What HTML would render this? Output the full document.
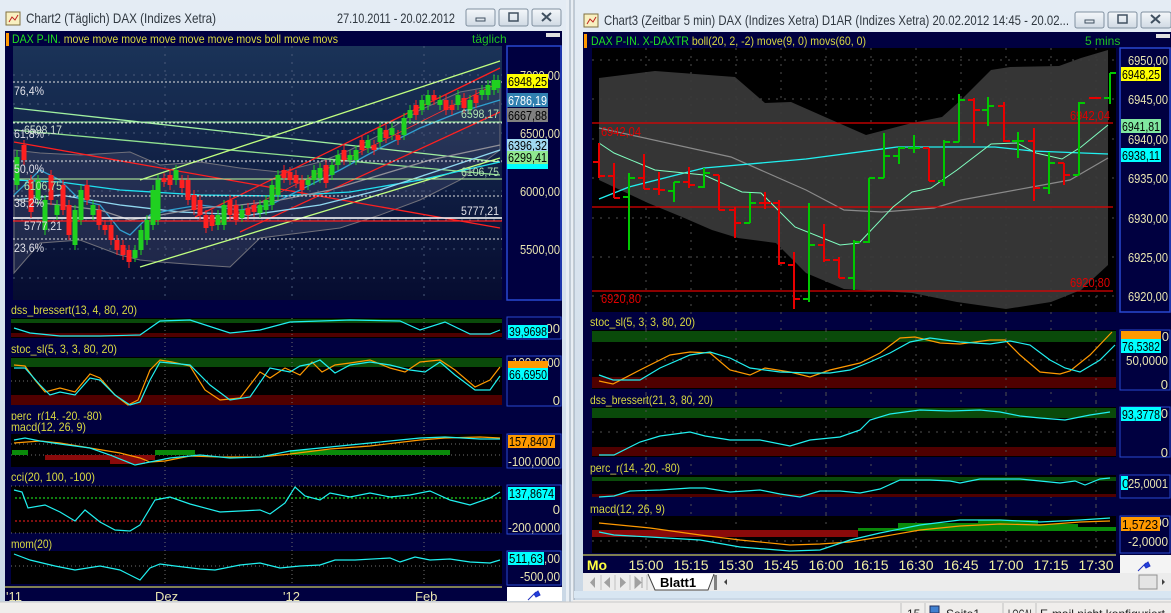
<!DOCTYPE html>
<html><head><meta charset="utf-8"><style>
html,body{margin:0;padding:0;background:#f0eeec;}
svg{display:block;font-family:"Liberation Sans Narrow","Liberation Sans",sans-serif;}
</style></head><body>
<svg width="1171" height="613" viewBox="0 0 1171 613" xmlns="http://www.w3.org/2000/svg">
<defs>
<linearGradient id="tb" x1="0" y1="0" x2="0" y2="1"><stop offset="0" stop-color="#e4ecf4"/><stop offset="1" stop-color="#cad8e6"/></linearGradient>
<linearGradient id="lp" x1="0" y1="0" x2="0" y2="1"><stop offset="0" stop-color="#1a3358"/><stop offset="1" stop-color="#060c30"/></linearGradient>
<linearGradient id="btn" x1="0" y1="0" x2="0" y2="1"><stop offset="0" stop-color="#f4f7fa"/><stop offset="1" stop-color="#d0dae4"/></linearGradient>
</defs>
<rect width="1171" height="613" fill="#f0eeec"/>
<!-- LEFT WINDOW -->
<rect x="0" y="0" width="566" height="603" fill="url(#tb)"/>
<rect x="566" y="0" width="7" height="603" fill="#e8eef4"/>
<line x1="570" y1="0" x2="570" y2="603" stroke="#98a8b8"/>
<rect x="6" y="12" width="14" height="13" fill="#f8f0c0" stroke="#807040"/>
<path d="M9 22 l3-5 3 3 3-5" stroke="#c02020" fill="none"/>
<text x="26" y="23" font-family="Liberation Sans,sans-serif" font-size="14" fill="#303840" textLength="190" lengthAdjust="spacingAndGlyphs">Chart2 (Täglich)  DAX (Indizes Xetra)</text>
<text x="337" y="23" font-family="Liberation Sans,sans-serif" font-size="14" fill="#303840" textLength="118" lengthAdjust="spacingAndGlyphs">27.10.2011 - 20.02.2012</text>
<rect x="466" y="9" width="29" height="17" rx="2" fill="url(#btn)" stroke="#8090a0"/>
<rect x="476" y="18" width="9" height="3" fill="none" stroke="#405060"/>
<rect x="499" y="9" width="29" height="17" rx="2" fill="url(#btn)" stroke="#8090a0"/>
<rect x="509" y="13" width="9" height="8" fill="none" stroke="#405060" stroke-width="1.5"/>
<rect x="532" y="9" width="29" height="17" rx="2" fill="url(#btn)" stroke="#8090a0"/>
<path d="M542 13 l9 8 M551 13 l-9 8" stroke="#405060" stroke-width="2"/>
<rect x="5" y="31" width="557" height="570" fill="#000040"/>
<rect x="6" y="33" width="3" height="13" fill="#ff9900"/>
<text x="12" y="43" font-size="12" fill="#20e020" textLength="326" lengthAdjust="spacingAndGlyphs">DAX P-IN. <tspan fill="#d8d840">move move move move move move movs boll move movs</tspan></text>
<text x="472" y="43" font-size="12" fill="#20c020">täglich</text>
<rect x="546" y="33" width="14" height="4" fill="#e0e0e0"/>
<!-- main plot -->
<rect x="13" y="46" width="489" height="254" fill="url(#lp)"/>
<g stroke="#4a5a7a" stroke-dasharray="2,6" stroke-width="1">
<line x1="13" y1="75" x2="502" y2="75"/><line x1="13" y1="104" x2="502" y2="104"/><line x1="13" y1="133" x2="502" y2="133"/><line x1="13" y1="162" x2="502" y2="162"/><line x1="13" y1="191" x2="502" y2="191"/><line x1="13" y1="220" x2="502" y2="220"/><line x1="13" y1="249" x2="502" y2="249"/><line x1="13" y1="278" x2="502" y2="278"/>
<line x1="165" y1="46" x2="165" y2="300"/><line x1="292" y1="46" x2="292" y2="300"/><line x1="424" y1="46" x2="424" y2="300"/>
</g>
<polygon points="14,150 40,153 80,155 130,152 160,165 200,162 240,168 280,172 320,162 350,150 380,135 420,110 460,92 500,85 500,150 460,180 420,200 380,215 340,228 300,233 260,238 230,267 200,265 160,262 140,260 120,255 80,240 40,243 14,273" fill="#4a5070" fill-opacity="0.35" stroke="#70707a" stroke-width="1"/>
<g fill="none" stroke-width="1.3">
<line x1="14" y1="108" x2="500" y2="162" stroke="#a0f0a0"/>
<line x1="14" y1="130" x2="500" y2="175" stroke="#90e090"/>
<line x1="140" y1="180" x2="500" y2="61" stroke="#c0ff80"/>
<line x1="140" y1="267" x2="500" y2="158" stroke="#c0ff80"/>
<line x1="195" y1="217" x2="500" y2="68" stroke="#ff2020"/>
<line x1="240" y1="232" x2="500" y2="112" stroke="#ff2020"/>
<line x1="215" y1="225" x2="500" y2="82" stroke="#ff3030" stroke-width="0.8"/>
<line x1="14" y1="142" x2="500" y2="228" stroke="#ff2020"/>
<polyline points="14,180 60,182 120,190 200,195 280,196 350,192 420,180 500,162" stroke="#20e0f0"/>
<polyline points="14,200 60,195 120,205 180,212 250,215 320,205 380,190 440,170 500,150" stroke="#90d8f0"/>
<polyline points="14,195 40,170 60,180 80,200 100,205 120,230 130,235 150,215 170,210 200,205 240,210 270,205 300,190 340,170 380,148 420,128 460,112 500,100" stroke="#30a0d0"/>
<polyline points="14,200 60,205 100,210 130,220 160,215 200,208 240,205 280,200 330,190 380,175 430,160 500,145" stroke="#909098"/>
</g>
<g stroke-dasharray="2,2" stroke="#e0e0e0" stroke-width="1">
<line x1="13" y1="82" x2="502" y2="82"/><line x1="13" y1="123" x2="502" y2="123"/><line x1="13" y1="161" x2="502" y2="161"/><line x1="13" y1="196" x2="502" y2="196"/><line x1="13" y1="239" x2="502" y2="239"/>
</g>
<line x1="13" y1="122" x2="502" y2="122" stroke="#a0f0a0"/>
<line x1="13" y1="179" x2="502" y2="179" stroke="#c0ffa0"/>
<line x1="13" y1="218" x2="502" y2="218" stroke="#ffffff" stroke-width="1.5"/>
<line x1="13" y1="221" x2="502" y2="221" stroke="#ff2020" stroke-width="1.2"/>
<!-- candles -->
<path d="M17 150V190M38 175V205M45 195V235M57 200V220M75 205V250M81 185V225M93 200V220M135 245V262M141 225V255M147 215V245M153 185V230M158 175V225M176 165V185M218 210V230M224 200V230M242 205V222M260 200V218M266 195V215M272 180V210M278 170V200M308 175V190M314 165V185M320 163V183M332 160V180M338 150V170M350 150V165M356 145V165M368 135V153M380 123V147M392 123V140M404 113V140M410 105V123M422 95V115M428 90V110M440 95V110M458 90V110M470 95V115M482 85V100M488 80V100M494 75V95M498 75V93" stroke="#20d020" stroke-width="1"/>
<path d="M17 157V185M38 180V200M45 200V230M57 205V215M75 210V245M81 190V220M93 205V215M135 250V258M141 230V250M147 220V240M153 190V225M158 180V220M176 170V180M218 215V225M224 205V225M242 210V218M260 205V213M266 200V210M272 185V205M278 175V195M308 180V185M314 170V180M320 168V178M332 165V175M338 155V165M350 155V160M356 150V160M368 140V148M380 128V142M392 128V135M404 118V135M410 110V118M422 100V110M428 95V105M440 100V105M458 95V105M470 100V110M482 90V95M488 85V95M494 80V90M498 80V88" stroke="#20d020" stroke-width="5"/>
<path d="M24 140V165M31 175V218M51 170V205M63 180V215M69 200V240M87 180V205M99 205V230M105 220V235M111 220V245M117 235V255M123 240V260M129 245V268M164 173V187M170 170V190M182 175V193M188 175V205M194 190V215M200 195V220M206 210V233M212 210V231M230 195V220M236 200V225M248 203V220M254 200V217M284 165V183M290 167V185M296 170V188M302 175V195M326 160V188M344 145V165M362 135V155M374 140V155M386 125V143M398 130V145M416 100V120M434 90V105M446 95V115M452 100V115M464 93V113M476 90V108" stroke="#ff2020" stroke-width="1"/>
<path d="M24 145V160M31 180V212M51 175V200M63 185V210M69 205V235M87 185V200M99 210V225M105 225V230M111 225V240M117 240V250M123 245V255M129 250V262M164 178V182M170 175V185M182 180V188M188 180V200M194 195V210M200 200V215M206 215V228M212 215V226M230 200V215M236 205V220M248 208V215M254 205V212M284 170V178M290 172V180M296 175V183M302 180V190M326 165V183M344 150V160M362 140V150M374 145V150M386 130V138M398 135V140M416 105V115M434 95V100M446 100V110M452 105V110M464 98V108M476 95V103" stroke="#ff2020" stroke-width="5"/>
<g font-size="12" fill="#e0e0e8" lengthAdjust="spacingAndGlyphs">
<text x="14" y="95" textLength="30" lengthAdjust="spacingAndGlyphs">76,4%</text><text x="14" y="138" textLength="30" lengthAdjust="spacingAndGlyphs">61,8%</text><text x="14" y="173" textLength="30" lengthAdjust="spacingAndGlyphs">50,0%</text><text x="14" y="207" textLength="30" lengthAdjust="spacingAndGlyphs">38,2%</text><text x="14" y="252" textLength="30" lengthAdjust="spacingAndGlyphs">23,6%</text>
<text x="24" y="134" fill="#d0e0d0" textLength="38" lengthAdjust="spacingAndGlyphs">6598,17</text><text x="24" y="190" fill="#b0e0b0" textLength="38" lengthAdjust="spacingAndGlyphs">6106,75</text><text x="24" y="230" textLength="38" lengthAdjust="spacingAndGlyphs">5777,21</text>
<text x="461" y="118" fill="#b0e0b0" textLength="38" lengthAdjust="spacingAndGlyphs">6598,17</text><text x="461" y="176" fill="#b0e0b0" textLength="38" lengthAdjust="spacingAndGlyphs">6106,75</text><text x="461" y="215" textLength="38" lengthAdjust="spacingAndGlyphs">5777,21</text>
</g>
<!-- left axis -->
<rect x="507" y="46" width="54" height="254" fill="#000040" stroke="#2848d0" stroke-width="1.5"/>
<g font-size="13" fill="#e8e4b0" text-anchor="end">
<text x="560" y="80" textLength="40" lengthAdjust="spacingAndGlyphs">7000,00</text><text x="560" y="138" textLength="40" lengthAdjust="spacingAndGlyphs">6500,00</text><text x="560" y="196" textLength="40" lengthAdjust="spacingAndGlyphs">6000,00</text><text x="560" y="254" textLength="40" lengthAdjust="spacingAndGlyphs">5500,00</text>
</g>
<g font-size="13">
<rect x="507" y="74" width="41" height="14" fill="#ffff00"/><text x="508" y="86" fill="#000" textLength="39" lengthAdjust="spacingAndGlyphs">6948,25</text>
<rect x="507" y="93" width="41" height="14" fill="#3080b0"/><text x="508" y="105" fill="#fff" textLength="39" lengthAdjust="spacingAndGlyphs">6786,19</text>
<rect x="507" y="108" width="41" height="14" fill="#808080"/><text x="508" y="120" fill="#000" textLength="39" lengthAdjust="spacingAndGlyphs">6667,88</text>
<rect x="507" y="139" width="41" height="13" fill="#a0d8f0"/><text x="508" y="150" fill="#000" textLength="39" lengthAdjust="spacingAndGlyphs">6396,32</text>
<rect x="507" y="162" width="41" height="7" fill="#00ffff"/>
<rect x="507" y="151" width="41" height="13" fill="#90e890"/><text x="508" y="162" fill="#000" textLength="39" lengthAdjust="spacingAndGlyphs">6299,41</text>
</g>
<!-- left subpanels -->
<g font-size="12" fill="#d8d840">
<text x="11" y="314" textLength="126" lengthAdjust="spacingAndGlyphs">dss_bressert(13, 4, 80, 20)</text>
<text x="11" y="353" textLength="106" lengthAdjust="spacingAndGlyphs">stoc_sl(5, 3, 3, 80, 20)</text>
<text x="11" y="431" textLength="75" lengthAdjust="spacingAndGlyphs">macd(12, 26, 9)</text>
<text x="11" y="481" textLength="84" lengthAdjust="spacingAndGlyphs">cci(20, 100, -100)</text>
<text x="11" y="548" textLength="41" lengthAdjust="spacingAndGlyphs">mom(20)</text>
</g>
<svg x="0" y="408" width="300" height="12"><text x="11" y="12" font-size="12" fill="#d8d840" textLength="91" lengthAdjust="spacingAndGlyphs">perc_r(14, -20, -80)</text></svg>
<rect x="11" y="318" width="491" height="20" fill="#000"/>
<rect x="11" y="319" width="491" height="4" fill="#0a4a0a"/><rect x="11" y="333" width="491" height="4" fill="#500000"/>
<rect x="11" y="357" width="491" height="48" fill="#000"/>
<rect x="11" y="358" width="491" height="9" fill="#0a4a0a"/><rect x="11" y="395" width="491" height="10" fill="#500000"/>
<rect x="11" y="434" width="491" height="33" fill="#000"/>
<rect x="11" y="486" width="491" height="47" fill="#000"/>
<rect x="11" y="551" width="491" height="33" fill="#000"/>
<g stroke="#707070" stroke-dasharray="1,3">
<line x1="11" y1="381" x2="502" y2="381"/><line x1="11" y1="444" x2="502" y2="444"/><line x1="11" y1="455" x2="502" y2="455"/><line x1="11" y1="486" x2="502" y2="486"/><line x1="11" y1="533" x2="502" y2="533"/><line x1="11" y1="566" x2="502" y2="566"/>
<line x1="165" y1="318" x2="165" y2="585"/><line x1="292" y1="318" x2="292" y2="585"/><line x1="424" y1="318" x2="424" y2="585"/>
</g>
<line x1="15" y1="498" x2="502" y2="498" stroke="#20ff20" stroke-dasharray="2,2"/>
<line x1="15" y1="521" x2="502" y2="521" stroke="#ff2020" stroke-dasharray="2,2"/>
<g fill="#0a8a0a"><rect x="12" y="450" width="16" height="5"/><rect x="155" y="450" width="40" height="5"/><rect x="290" y="450" width="160" height="5"/></g>
<g fill="#8a0a0a"><rect x="45" y="455" width="110" height="5"/><rect x="110" y="460" width="35" height="4"/></g>
<g fill="none" stroke-width="1.2">
<polyline stroke="#20f0f0" points="14,328 30,333 60,336 100,336 140,335 160,321 190,320 230,333 260,330 290,322 350,320 400,321 420,330 445,322 470,334 490,334 500,330"/>
<polyline stroke="#ff9900" points="14,365 25,366 35,380 45,392 60,388 75,392 90,374 100,378 115,395 128,405 138,400 150,370 160,360 172,362 190,366 205,390 220,400 240,398 260,372 270,378 285,368 300,375 312,362 322,372 335,365 350,363 370,360 390,368 405,372 420,362 440,360 455,370 475,387 490,380 500,367"/>
<polyline stroke="#20f0f0" points="14,368 25,368 40,385 50,395 60,392 75,395 90,378 100,380 115,395 130,405 140,402 150,380 160,362 170,363 190,365 210,385 230,400 250,397 270,368 290,372 300,366 310,364 320,360 335,373 350,365 370,362 390,365 410,370 425,372 440,362 455,375 475,390 490,390 500,376"/>
<polyline stroke="#ff9900" points="14,443 40,441 60,443 90,448 120,453 140,458 150,462 165,461 190,456 220,457 260,457 290,454 330,449 370,446 420,440 445,438 480,437 500,438"/>
<polyline stroke="#20f0f0" points="14,440 25,438 40,441 60,444 90,448 110,455 135,465 150,462 170,458 200,455 230,458 260,457 290,451 330,447 370,443 420,438 445,437 480,439 500,439"/>
<polyline stroke="#20f0f0" points="14,490 22,492 28,508 45,505 60,512 75,521 85,510 100,522 115,530 130,531 140,525 155,500 170,497 190,504 220,512 260,510 270,514 285,503 295,487 305,496 320,500 330,493 350,497 370,493 390,497 410,495 430,491 450,500 470,505 490,498 500,492"/>
<polyline stroke="#20f0f0" points="14,554 30,560 55,566 75,570 100,566 120,570 140,580 150,568 160,564 175,566 200,569 215,570 240,565 260,563 280,568 300,566 320,565 335,560 355,560 390,558 400,562 415,557 430,560 450,559 470,562 490,563 500,560"/>
</g>
<g stroke="#2848d0" fill="#000040">
<rect x="507" y="317" width="54" height="22"/>
<rect x="507" y="356" width="54" height="50"/>
<rect x="507" y="434" width="54" height="34"/>
<rect x="507" y="485" width="54" height="49"/>
<rect x="507" y="551" width="54" height="34"/>
</g>
<g font-size="13" fill="#e8e4b0" text-anchor="end">
<text x="560" y="333">00</text><text x="560" y="367" textLength="48" lengthAdjust="spacingAndGlyphs">100,0000</text><text x="560" y="405">0</text>
<text x="560" y="466" textLength="52" lengthAdjust="spacingAndGlyphs">-100,0000</text><text x="560" y="514">0</text><text x="560" y="532" textLength="52" lengthAdjust="spacingAndGlyphs">-200,0000</text>
<text x="560" y="563" textLength="16" lengthAdjust="spacingAndGlyphs">,00</text><text x="560" y="581" textLength="40" lengthAdjust="spacingAndGlyphs">-500,00</text>
</g>
<g font-size="13" fill="#000">
<rect x="508" y="325" width="40" height="13" fill="#00ffff"/><text x="509" y="336" textLength="38" lengthAdjust="spacingAndGlyphs">39,9698</text>
<rect x="508" y="361" width="40" height="8" fill="#ff9900"/>
<rect x="508" y="368" width="40" height="12" fill="#00ffff"/><text x="509" y="379" textLength="38" lengthAdjust="spacingAndGlyphs">66,6950</text>
<rect x="508" y="435" width="47" height="13" fill="#ff9900"/><text x="509" y="446" textLength="45" lengthAdjust="spacingAndGlyphs">157,8407</text>
<rect x="508" y="487" width="47" height="13" fill="#00ffff"/><text x="509" y="498" textLength="45" lengthAdjust="spacingAndGlyphs">137,8674</text>
<rect x="508" y="552" width="36" height="13" fill="#00ffff"/><text x="509" y="563" textLength="34" lengthAdjust="spacingAndGlyphs">511,63</text>
</g>
<rect x="5" y="585" width="497" height="16" fill="#000040"/>
<line x1="5" y1="587" x2="502" y2="587" stroke="#ffff60"/>
<g font-size="13" fill="#e8e4b0"><text x="6" y="601">'11</text><text x="155" y="601">Dez</text><text x="283" y="601">'12</text><text x="415" y="601">Feb</text></g>
<rect x="507" y="587" width="55" height="14" fill="#ffffff"/>
<path d="M528 600 l8-8 M534 594 l4-3 2 4 -4 2z" stroke="#2030c0" fill="#2040e0"/>

<!-- RIGHT WINDOW -->
<rect x="574" y="0" width="597" height="600" fill="url(#tb)"/>
<line x1="574" y1="0" x2="574" y2="600" stroke="#98a8b8"/>
<rect x="584" y="14" width="14" height="13" fill="#f8f0c0" stroke="#807040"/>
<path d="M587 24 l3-5 3 3 3-5" stroke="#c02020" fill="none"/>
<text x="604" y="25" font-family="Liberation Sans,sans-serif" font-size="14" fill="#303840" textLength="465" lengthAdjust="spacingAndGlyphs">Chart3 (Zeitbar 5 min)  DAX (Indizes Xetra) D1AR (Indizes Xetra) 20.02.2012 14:45 - 20.02...</text>
<rect x="1075" y="12" width="29" height="16" rx="2" fill="url(#btn)" stroke="#8090a0"/>
<rect x="1085" y="20" width="9" height="3" fill="none" stroke="#405060"/>
<rect x="1108" y="12" width="29" height="16" rx="2" fill="url(#btn)" stroke="#8090a0"/>
<rect x="1118" y="15" width="9" height="8" fill="none" stroke="#405060" stroke-width="1.5"/>
<rect x="1141" y="12" width="30" height="16" rx="2" fill="url(#btn)" stroke="#8090a0"/>
<path d="M1151 15 l9 8 M1160 15 l-9 8" stroke="#405060" stroke-width="2"/>
<rect x="583" y="32" width="588" height="541" fill="#000040"/>
<rect x="584" y="34" width="3" height="14" fill="#ff9900"/>
<text x="591" y="45" font-size="12" fill="#20e020" textLength="275" lengthAdjust="spacingAndGlyphs">DAX P-IN. X-DAXTR <tspan fill="#d8d840">boll(20, 2, -2) move(9, 0) movs(60, 0)</tspan></text>
<text x="1085" y="45" font-size="12" fill="#20c020">5 mins</text>
<rect x="1156" y="34" width="14" height="4" fill="#e0e0e0"/>
<rect x="592" y="48" width="524" height="264" fill="#000"/>
<g stroke="#505050" stroke-dasharray="2,6">
<line x1="592" y1="60" x2="1116" y2="60"/><line x1="592" y1="99" x2="1116" y2="99"/><line x1="592" y1="139" x2="1116" y2="139"/><line x1="592" y1="178" x2="1116" y2="178"/><line x1="592" y1="218" x2="1116" y2="218"/><line x1="592" y1="257" x2="1116" y2="257"/><line x1="592" y1="296" x2="1116" y2="296"/>
<line x1="646" y1="48" x2="646" y2="552"/><line x1="691" y1="48" x2="691" y2="552"/><line x1="736" y1="48" x2="736" y2="552"/><line x1="781" y1="48" x2="781" y2="552"/><line x1="826" y1="48" x2="826" y2="552"/><line x1="871" y1="48" x2="871" y2="552"/><line x1="916" y1="48" x2="916" y2="552"/><line x1="961" y1="48" x2="961" y2="552"/><line x1="1006" y1="48" x2="1006" y2="552"/><line x1="1051" y1="48" x2="1051" y2="552"/><line x1="1096" y1="48" x2="1096" y2="552"/>
</g>
<polygon points="599,78 655,71 735,77 765,103 791,102 825,117 866,135 912,123 942,117 961,100 991,70 1010,67 1059,66 1081,58 1108,50 1108,265 1081,290 1051,302 1006,309 957,302 912,293 844,289 806,273 776,243 738,238 712,230 682,217 648,203 599,180" fill="#3a3a3a" fill-opacity="0.92"/>
<polyline fill="none" stroke="#8a8a8a" stroke-width="1.2" points="599,128 731,157 806,190 844,210 882,212 934,208 961,200 1032,187 1070,180 1108,158"/>
<g stroke="#e00000" stroke-width="1.2"><line x1="592" y1="123" x2="1113" y2="123"/><line x1="592" y1="207" x2="1113" y2="207"/><line x1="592" y1="291" x2="1113" y2="291"/></g>
<polyline fill="none" stroke="#20f0f0" stroke-width="1.3" points="599,199 629,187 704,168 806,159 897,147 995,147 1032,151 1108,154"/>
<polyline fill="none" stroke="#80ffc0" stroke-width="1" points="599,143 614,153 655,170 704,175 742,192 761,193 795,227 840,245 859,243 893,207 912,192 931,188 957,170 991,144 1017,143 1036,153 1062,159 1081,147 1108,125"/>
<g font-size="13" fill="#e00000"><text x="601" y="136" textLength="40" lengthAdjust="spacingAndGlyphs">6942,04</text><text x="601" y="303" textLength="40" lengthAdjust="spacingAndGlyphs">6920,80</text><text x="1070" y="120" textLength="40" lengthAdjust="spacingAndGlyphs">6942,04</text><text x="1070" y="287" textLength="40" lengthAdjust="spacingAndGlyphs">6920,80</text></g>
<path stroke="#00c800" stroke-width="2" fill="none" d="M629 173V250M623 197H629M629 178H635 M674 182V202M668 191H674M674 182H680 M704 168V188M698 187H704M704 173H710 M750 193V223M744 223H750M750 203H756 M809 203V302M803 299H809M809 245H815 M854 240V290M848 278H854M854 242H860 M869 178V243M863 242H869M869 178H875 M884 133V178M878 178H884M884 156H890 M899 147V164M893 156H899M899 148H905 M914 135V153M908 148H914M914 148H920 M944 140V186M938 181H944M944 142H950 M959 94V142M953 142H959M959 100H965 M988 97V126M982 110H988M988 106H994 M1018 132V158M1012 141H1018M1018 141H1024 M1049 152V194M1043 188H1049M1049 163H1055 M1079 102V175M1073 175H1079M1079 103H1085 M1110 73V104M1104 98H1110M1110 73H1116"/>
<path stroke="#e80000" stroke-width="2" fill="none" d="M599 143V178M593 162H599M599 176H605 M614 163V198M608 176H614M614 198H620 M644 154V189M638 178H644M644 189H650 M659 172V195M653 189H659M659 190H665 M689 167V188M683 182H689M689 185H695 M719 175V210M713 175H719M719 210H725 M735 207V238M729 210H735M735 223H741 M765 192V209M759 203H765M765 203H771 M779 200V265M773 203H779M779 263H785 M794 252V309M788 265H794M794 299H800 M824 224V262M818 245H824M824 260H830 M839 257V278M833 260H839M839 278H845 M929 148V181M923 148H929M929 181H935 M974 98V143M968 100H974M974 110H980 M1004 102V142M998 106H1004M1004 141H1010 M1034 128V201M1028 141H1034M1034 188H1040 M1064 163V185M1058 163H1064M1064 175H1070 M1095 97V99M1089 98H1095M1095 98H1101"/>
<rect x="1120" y="48" width="50" height="264" fill="#000040" stroke="#2848d0" stroke-width="1.5"/>
<g font-size="13" fill="#e8e4b0" text-anchor="end">
<text x="1168" y="65" textLength="40" lengthAdjust="spacingAndGlyphs">6950,00</text><text x="1168" y="104" textLength="40" lengthAdjust="spacingAndGlyphs">6945,00</text><text x="1168" y="144" textLength="40" lengthAdjust="spacingAndGlyphs">6940,00</text><text x="1168" y="183" textLength="40" lengthAdjust="spacingAndGlyphs">6935,00</text><text x="1168" y="223" textLength="40" lengthAdjust="spacingAndGlyphs">6930,00</text><text x="1168" y="262" textLength="40" lengthAdjust="spacingAndGlyphs">6925,00</text><text x="1168" y="301" textLength="40" lengthAdjust="spacingAndGlyphs">6920,00</text>
</g>
<g font-size="13" fill="#000">
<rect x="1121" y="67" width="40" height="14" fill="#ffff00"/><text x="1122" y="79" textLength="38" lengthAdjust="spacingAndGlyphs">6948,25</text>
<rect x="1121" y="119" width="40" height="14" fill="#80e8a0"/><text x="1122" y="131" textLength="38" lengthAdjust="spacingAndGlyphs">6941,81</text>
<rect x="1121" y="148" width="40" height="14" fill="#00ffff"/><text x="1122" y="160" textLength="38" lengthAdjust="spacingAndGlyphs">6938,11</text>
</g>
<!-- right subpanels -->
<g font-size="12" fill="#d8d840">
<text x="590" y="326" textLength="105" lengthAdjust="spacingAndGlyphs">stoc_sl(5, 3, 3, 80, 20)</text>
<text x="590" y="404" textLength="123" lengthAdjust="spacingAndGlyphs">dss_bressert(21, 3, 80, 20)</text>
<text x="590" y="472" textLength="90" lengthAdjust="spacingAndGlyphs">perc_r(14, -20, -80)</text>
<text x="590" y="513" textLength="75" lengthAdjust="spacingAndGlyphs">macd(12, 26, 9)</text>
</g>
<rect x="592" y="330" width="524" height="59" fill="#000"/>
<rect x="592" y="331" width="524" height="11" fill="#0a4a0a"/><rect x="592" y="377" width="524" height="11" fill="#500000"/>
<rect x="592" y="407" width="524" height="50" fill="#000"/>
<rect x="592" y="408" width="524" height="10" fill="#0a4a0a"/><rect x="592" y="447" width="524" height="9" fill="#500000"/>
<rect x="592" y="475" width="524" height="22" fill="#000"/>
<rect x="592" y="477" width="524" height="4" fill="#0a4a0a"/><rect x="592" y="494" width="524" height="3" fill="#500000"/>
<rect x="592" y="516" width="524" height="37" fill="#000"/>
<g stroke="#505050" stroke-dasharray="2,6">
<line x1="592" y1="360" x2="1116" y2="360"/><line x1="592" y1="432" x2="1116" y2="432"/><line x1="592" y1="541" x2="1116" y2="541"/>
<line x1="646" y1="330" x2="646" y2="552"/><line x1="736" y1="330" x2="736" y2="552"/><line x1="826" y1="330" x2="826" y2="552"/><line x1="916" y1="330" x2="916" y2="552"/><line x1="1006" y1="330" x2="1006" y2="552"/><line x1="1096" y1="330" x2="1096" y2="552"/>
</g>
<g fill="#8a0a0a"><rect x="592" y="530" width="266" height="7"/></g>
<g fill="#0a8a0a"><rect x="858" y="528" width="40" height="3"/><rect x="898" y="523" width="80" height="8"/><rect x="978" y="520" width="60" height="11"/><rect x="1038" y="524" width="40" height="7"/><rect x="1078" y="527" width="38" height="4"/></g>
<g fill="none" stroke-width="1.2">
<polyline stroke="#ff9900" points="599,381 613,384 640,370 670,355 690,352 710,353 730,370 750,375 765,368 790,372 810,377 830,370 860,363 880,353 900,338 915,337 940,343 960,344 990,340 1005,340 1020,355 1040,372 1060,374 1070,371 1090,355 1112,332"/>
<polyline stroke="#20f0f0" points="599,375 613,380 640,380 660,368 690,355 710,352 730,358 750,368 780,372 810,373 830,373 850,370 870,362 890,353 910,342 930,338 960,342 990,344 1010,341 1030,345 1050,360 1065,368 1080,372 1100,360 1115,345"/>
<polyline stroke="#20f0f0" points="599,455 614,455 640,442 660,436 690,432 705,436 730,440 760,440 790,446 810,440 840,437 860,430 870,420 890,414 920,410 950,411 980,410 1000,412 1020,416 1040,418 1065,420 1090,415 1110,412"/>
<polyline stroke="#20f0f0" points="599,497 614,496 630,491 660,490 690,488 705,488 730,492 760,490 780,494 800,497 820,491 840,491 860,493 880,489 900,480 930,480 950,481 960,483 980,479 1000,479 1020,479 1040,481 1060,483 1075,481 1085,485 1100,479 1110,478"/>
<polyline stroke="#ff9900" points="599,523 650,528 700,535 740,540 790,545 820,544 850,542 880,537 920,530 960,526 1000,524 1040,525 1080,522 1110,521"/>
<polyline stroke="#20f0f0" points="599,532 614,535 650,537 700,540 740,547 790,551 820,550 850,540 880,533 920,525 960,520 1000,520 1040,522 1080,520 1110,518"/>
</g>
<g stroke="#2848d0" fill="#000040"><rect x="1120" y="330" width="50" height="60"/><rect x="1120" y="407" width="50" height="50"/><rect x="1120" y="475" width="50" height="23"/><rect x="1120" y="516" width="50" height="37"/></g>
<g font-size="13" fill="#e8e4b0" text-anchor="end">
<text x="1169" y="341">0</text><text x="1168" y="365" textLength="42" lengthAdjust="spacingAndGlyphs">50,0000</text><text x="1168" y="389">0</text>
<text x="1168" y="418">0</text><text x="1168" y="457">0</text>
<text x="1168" y="488" textLength="40" lengthAdjust="spacingAndGlyphs">25,0001</text>
<text x="1169" y="527">00</text><text x="1168" y="546" textLength="40" lengthAdjust="spacingAndGlyphs">-2,0000</text>
</g>
<g font-size="13" fill="#000">
<rect x="1121" y="331" width="40" height="8" fill="#ff9900"/>
<rect x="1121" y="339" width="40" height="14" fill="#00ffff"/><text x="1122" y="351" textLength="38" lengthAdjust="spacingAndGlyphs">76,5382</text>
<rect x="1121" y="407" width="40" height="14" fill="#00ffff"/><text x="1122" y="419" textLength="38" lengthAdjust="spacingAndGlyphs">93,3778</text>
<rect x="1121" y="476" width="7" height="14" fill="#00ffff"/><text x="1122" y="488">0</text>
<rect x="1121" y="517" width="39" height="14" fill="#ff9900"/><text x="1122" y="529" textLength="36" lengthAdjust="spacingAndGlyphs">1,5723</text>
</g>
<rect x="583" y="553" width="533" height="20" fill="#000040"/>
<line x1="583" y1="555" x2="1116" y2="555" stroke="#ffff60"/>
<g font-size="14" fill="#f0f0a0" text-anchor="middle">
<text x="597" y="570" font-family="Liberation Sans,sans-serif" font-weight="bold" fill="#ffff40">Mo</text>
<text x="646" y="570">15:00</text><text x="691" y="570">15:15</text><text x="736" y="570">15:30</text><text x="781" y="570">15:45</text><text x="826" y="570">16:00</text><text x="871" y="570">16:15</text><text x="916" y="570">16:30</text><text x="961" y="570">16:45</text><text x="1006" y="570">17:00</text><text x="1051" y="570">17:15</text><text x="1096" y="570">17:30</text>
</g>
<rect x="1120" y="555" width="51" height="18" fill="#f4f4f4"/>
<path d="M1138 571 l8-8 M1144 565 l4-3 2 4 -4 2z" stroke="#2030c0" fill="#2040e0"/>
<rect x="583" y="573" width="588" height="18" fill="#ececec"/>
<g fill="#a0a0a0"><path d="M587 577v11M595 577l-5 5.5 5 5.5z"/><path d="M610 577l-6 5.5 6 5.5z"/><path d="M620 577l6 5.5-6 5.5z"/><path d="M635 577l6 5.5-6 5.5zM642 577v11" stroke="#a0a0a0"/></g>
<g stroke="#c0c0c0"><line x1="601" y1="575" x2="601" y2="590"/><line x1="615" y1="575" x2="615" y2="590"/><line x1="630" y1="575" x2="630" y2="590"/><line x1="647" y1="575" x2="647" y2="590"/></g>
<path d="M648 574 L655 590 H708 L714 574" fill="#fff" stroke="#404040"/>
<text x="660" y="587" font-family="Liberation Sans,sans-serif" font-weight="bold" font-size="13" fill="#000">Blatt1</text>
<rect x="714" y="575" width="3" height="15" fill="#808080"/>
<path d="M727 579l-3 3 3 3z" fill="#404040"/>
<rect x="1139" y="575" width="18" height="14" fill="#e4e4e4" stroke="#909090"/>
<path d="M1162 579l3 3-3 3z" fill="#404040"/>
<rect x="574" y="591" width="597" height="7" fill="#d8e6f2"/>
<!-- status bar -->
<rect x="0" y="602" width="1171" height="11" fill="#f0eeec"/>
<line x1="0" y1="602" x2="1171" y2="602" stroke="#c8c8c8"/>
<g stroke="#c0c0c0"><line x1="901" y1="603" x2="901" y2="613"/><line x1="925" y1="603" x2="925" y2="613"/><line x1="1003" y1="603" x2="1003" y2="613"/><line x1="1036" y1="603" x2="1036" y2="613"/></g>
<rect x="930" y="606" width="9" height="7" fill="#4080d0" stroke="#203060"/>
<g font-family="Liberation Sans,sans-serif" font-size="12" fill="#202020"><text x="907" y="618">15</text><text x="946" y="618">Seite1</text><text x="1008" y="618" textLength="26" lengthAdjust="spacingAndGlyphs">LOCAL</text><text x="1040" y="618" textLength="125" lengthAdjust="spacingAndGlyphs">E-mail nicht konfiguriert</text></g>
</svg>
</body></html>
